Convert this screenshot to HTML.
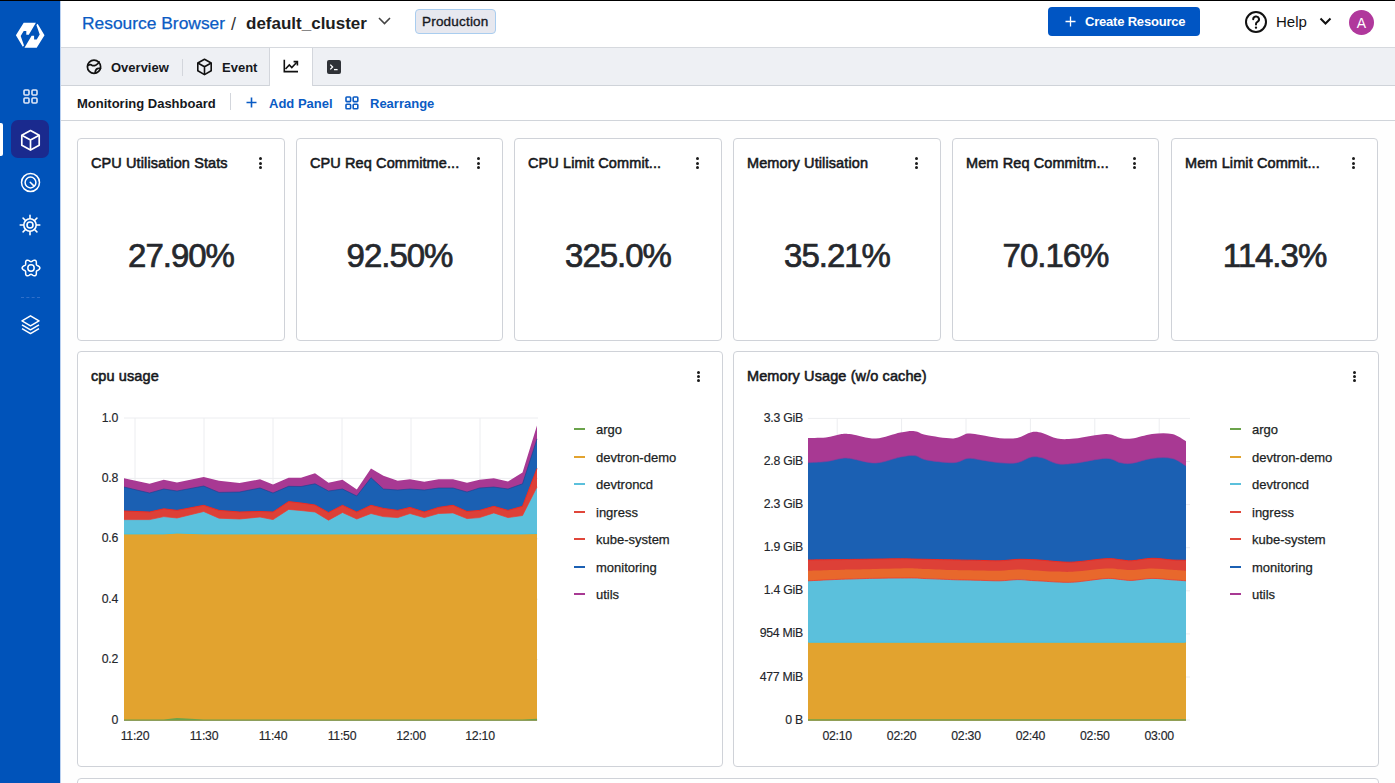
<!DOCTYPE html>
<html><head><meta charset="utf-8">
<style>
*{box-sizing:border-box;margin:0;padding:0}
html,body{width:1395px;height:783px;overflow:hidden;background:#fefefe;font-family:"Liberation Sans",sans-serif;color:#000}
.abs{position:absolute}
#topline{left:0;top:0;width:1395px;height:1px;background:#000}
#side{left:0;top:1px;width:60px;height:782px;background:#0053ba}
#sideb{left:60px;top:1px;width:1px;height:782px;background:#b9d0f0}
#hdr{left:61px;top:1px;width:1334px;height:47px;background:#fff;border-bottom:1px solid #d6d9de}
.t{position:absolute;white-space:nowrap;line-height:1}
#tabs{left:61px;top:48px;width:1334px;height:38px;background:#eef0f4;border-bottom:1px solid #cfd3d9}
#bar2{left:61px;top:86px;width:1334px;height:35px;background:#fff;border-bottom:1px solid #d0d4da}
.card{position:absolute;background:#fff;border:1px solid #cfd2d8;border-radius:4px}
.ct{position:absolute;left:13px;top:17px;font-size:14.5px;color:#16181c;white-space:nowrap;line-height:1;letter-spacing:0.1px;-webkit-text-stroke:0.55px #16181c}
.kb{position:absolute;width:3px;height:3px;border-radius:50%;background:#1b1b1b}
.big{position:absolute;left:0;width:100%;text-align:center;font-size:33px;color:#25282d;line-height:1;letter-spacing:-1px;-webkit-text-stroke:0.7px #25282d}
.lg{position:absolute;font-size:13px;color:#1c1f24;-webkit-text-stroke:0.25px #1c1f24;white-space:nowrap;line-height:1}
.lgl{position:absolute;width:11px;height:2px}
.ax{position:absolute;font-size:12.3px;letter-spacing:-0.25px;color:#23262b;-webkit-text-stroke:0.15px #23262b;white-space:nowrap;line-height:1}
</style></head><body>
<div id="topline" class="abs"></div>
<div id="side" class="abs"></div>
<div id="sideb" class="abs"></div>

<!-- logo -->
<svg class="abs" style="left:0;top:0" width="60" height="60" viewBox="0 0 60 60">
 <path d="M23.7 22.8 L35.9 22.8 L28.8 34.8 L26.3 34.8 L26.3 31 L23.7 31 L20.7 36 L24 45.5 L22.8 46.8 L15.9 35.3 Z" fill="#fff"/>
 <path d="M36.7 47.8 L24.5 47.8 L31.6 35.8 L34.1 35.8 L34.1 39.6 L36.7 39.6 L39.7 34.6 L36.4 25.1 L37.6 23.8 L44.5 35.3 Z" fill="#fff"/>
</svg>
<!-- grid icon -->
<svg class="abs" style="left:23px;top:89px" width="15" height="15" viewBox="0 0 15 15" fill="none" stroke="#dfe8f7" stroke-width="1.6">
 <rect x="1" y="1" width="5" height="5" rx="1"/><rect x="9" y="1" width="5" height="5" rx="1"/>
 <rect x="1" y="9" width="5" height="5" rx="1"/><rect x="9" y="9" width="5" height="5" rx="1"/>
</svg>
<div class="abs" style="left:0;top:123px;width:3px;height:33px;background:#fff;border-radius:0 2px 2px 0"></div>
<div class="abs" style="left:11px;top:120px;width:38px;height:38px;background:#1a2a8e;border-radius:7px"></div>
<svg class="abs" style="left:20px;top:129px" width="21" height="23" viewBox="0 0 21 23" fill="none" stroke="#fff" stroke-width="1.7" stroke-linejoin="round">
 <path d="M10.5 1.5 L19.2 6.3 L19.2 16.3 L10.5 21.1 L1.8 16.3 L1.8 6.3 Z"/><path d="M1.8 6.3 L10.5 11.1 L19.2 6.3 M10.5 11.1 L10.5 21.1"/>
</svg>
<!-- target icon -->
<svg class="abs" style="left:20px;top:172px" width="21" height="21" viewBox="0 0 21 21" fill="none" stroke="#fff" stroke-width="1.5">
 <circle cx="10.5" cy="10.5" r="9"/><circle cx="10.5" cy="10.5" r="5.4"/><path d="M10.2 10.2 L13.6 13.6" stroke-linecap="round"/>
</svg>
<!-- sun gear -->
<svg class="abs" style="left:19px;top:214px" width="22" height="22" viewBox="0 0 22 22" fill="none" stroke="#fff" stroke-width="1.6" stroke-linecap="round">
 <circle cx="11" cy="11" r="6.2"/><circle cx="11" cy="11" r="3"/>
 <path d="M11 1.2v3M11 17.8v3M1.2 11h3M17.8 11h3M4.1 4.1l2.1 2.1M15.8 15.8l2.1 2.1M4.1 17.9l2.1-2.1M15.8 6.2l2.1-2.1"/>
</svg>
<!-- gear -->
<svg class="abs" style="left:20.5px;top:257.8px" width="20" height="20" viewBox="0 0 20 20" fill="none" stroke="#fff" stroke-width="1.5" stroke-linejoin="round">
 <path d="M18.85 10.00 L18.74 10.57 L18.41 11.11 L17.92 11.58 L17.34 11.97 L16.74 12.29 L16.20 12.57 L15.78 12.85 L15.50 13.17 L15.36 13.58 L15.33 14.09 L15.35 14.70 L15.37 15.37 L15.33 16.07 L15.16 16.73 L14.86 17.28 L14.43 17.66 L13.87 17.85 L13.25 17.84 L12.60 17.65 L11.97 17.34 L11.39 16.98 L10.88 16.66 L10.42 16.43 L10.00 16.35 L9.58 16.43 L9.12 16.66 L8.61 16.98 L8.03 17.34 L7.40 17.65 L6.75 17.84 L6.13 17.85 L5.58 17.66 L5.14 17.28 L4.84 16.73 L4.67 16.07 L4.63 15.37 L4.65 14.70 L4.67 14.09 L4.64 13.58 L4.50 13.17 L4.22 12.85 L3.80 12.57 L3.26 12.29 L2.66 11.97 L2.08 11.58 L1.59 11.11 L1.26 10.57 L1.15 10.00 L1.26 9.43 L1.59 8.89 L2.08 8.42 L2.66 8.03 L3.26 7.71 L3.80 7.43 L4.22 7.15 L4.50 6.83 L4.64 6.42 L4.67 5.91 L4.65 5.30 L4.63 4.63 L4.67 3.93 L4.84 3.27 L5.14 2.72 L5.57 2.34 L6.13 2.15 L6.75 2.16 L7.40 2.35 L8.03 2.66 L8.61 3.02 L9.12 3.34 L9.58 3.57 L10.00 3.65 L10.42 3.57 L10.88 3.34 L11.39 3.02 L11.97 2.66 L12.60 2.35 L13.25 2.16 L13.87 2.15 L14.43 2.34 L14.86 2.72 L15.16 3.27 L15.33 3.93 L15.37 4.63 L15.35 5.30 L15.33 5.91 L15.36 6.42 L15.50 6.82 L15.78 7.15 L16.20 7.43 L16.74 7.71 L17.34 8.03 L17.92 8.42 L18.41 8.89 L18.74 9.43Z"/>
 <circle cx="10" cy="10" r="3.2"/>
</svg>
<div class="abs" style="left:21px;top:297px;width:19px;height:0;border-top:1px dashed #2f6fc9"></div>
<!-- layers -->
<svg class="abs" style="left:20px;top:314px" width="21" height="21" viewBox="0 0 21 21" fill="none" stroke="#fff" stroke-width="1.5" stroke-linejoin="round">
 <path d="M10.5 1.8 L19 6.8 L10.5 11.8 L2 6.8 Z"/><path d="M2 10.8 L10.5 15.8 L19 10.8"/><path d="M2 14.6 L10.5 19.6 L19 14.6"/>
</svg>
<div id="hdr" class="abs"></div>

<div class="t" style="left:82px;top:14.7px;font-size:17.4px;color:#0a5bc4;-webkit-text-stroke:0.25px #0a5bc4">Resource Browser</div>
<div class="t" style="left:231px;top:14.7px;font-size:18px;color:#333">/</div>
<div class="t" style="left:246px;top:14.7px;font-size:17px;font-weight:bold;color:#1e1e1e">default_cluster</div>
<svg class="abs" style="left:377px;top:16px" width="15" height="10" viewBox="0 0 15 10" fill="none" stroke="#444" stroke-width="1.6"><path d="M2 2 L7.5 7.5 L13 2"/></svg>
<div class="abs" style="left:415px;top:9px;width:81px;height:25px;background:#e7e8ef;border:1px solid #a9cdef;border-radius:4px"></div>
<div class="t" style="left:422px;top:15px;font-size:13.5px;letter-spacing:0.2px;color:#16181f;-webkit-text-stroke:0.35px #16181f">Production</div>
<div class="abs" style="left:1048px;top:7px;width:152px;height:29px;background:#0055c3;border-radius:4px"></div>
<svg class="abs" style="left:1065px;top:16px" width="11" height="11" viewBox="0 0 11 11" stroke="#fff" stroke-width="1.3"><path d="M5.5 0.5v10M0.5 5.5h10"/></svg>
<div class="t" style="left:1085px;top:15px;font-size:13px;font-weight:bold;color:#fff;letter-spacing:-0.2px">Create Resource</div>
<svg class="abs" style="left:1244px;top:10px" width="24" height="24" viewBox="0 0 24 24" fill="none" stroke="#111" stroke-width="2"><circle cx="12" cy="12" r="10"/><path d="M9.2 9.3a2.9 2.9 0 1 1 4.2 2.6c-.9.5-1.4 1.1-1.4 2.1v.5" stroke-linecap="round"/><circle cx="12" cy="17.6" r="0.6" fill="#111" stroke-width="1.2"/></svg>
<div class="t" style="left:1276px;top:14px;font-size:15px;color:#111">Help</div>
<svg class="abs" style="left:1319px;top:17px" width="13" height="9" viewBox="0 0 13 9" fill="none" stroke="#111" stroke-width="2"><path d="M1.5 1.5 L6.5 6.5 L11.5 1.5"/></svg>
<div class="abs" style="left:1349px;top:10px;width:25px;height:25px;border-radius:50%;background:#b0389c"></div>
<div class="t" style="left:1349px;top:16px;width:25px;text-align:center;font-size:14px;color:#fff">A</div>
<div id="tabs" class="abs"></div>
<div id="bar2" class="abs"></div>

<!-- tabs -->
<svg class="abs" style="left:86px;top:59px" width="16" height="16" viewBox="0 0 16 16" fill="none" stroke="#111" stroke-width="1.7" stroke-linejoin="round" stroke-linecap="round">
 <circle cx="8" cy="7.8" r="6.6"/><path d="M1.8 6.6 C3.5 5.4 4.8 5.2 6 6.3 C7.2 7.3 8.6 6.6 10.4 5.8 C11.8 5.1 12.6 4.2 13 2.8"/><path d="M9.2 14 C9.2 11.6 9.6 10.4 11.4 9.6 C12.6 9.1 13.8 9.2 14.6 9.4"/>
</svg>
<div class="t" style="left:111px;top:61px;font-size:13px;font-weight:bold;color:#16181c">Overview</div>
<div class="abs" style="left:182px;top:59px;width:1px;height:17px;background:#d3d6dc"></div>
<svg class="abs" style="left:196px;top:58px" width="17" height="18" viewBox="0 0 17 18" fill="none" stroke="#111" stroke-width="1.6" stroke-linejoin="round">
 <path d="M8.5 1.3 L15.2 5 L15.2 12.8 L8.5 16.6 L1.8 12.8 L1.8 5 Z"/><path d="M1.8 5 L8.5 8.8 L15.2 5 M8.5 8.8 L8.5 16.6"/>
</svg>
<div class="t" style="left:222px;top:61px;font-size:13px;font-weight:bold;color:#16181c">Event</div>
<div class="abs" style="left:269px;top:48px;width:44px;height:38px;background:#fff;border-left:1px solid #d3d6dc;border-right:1px solid #d3d6dc"></div>
<svg class="abs" style="left:283px;top:59px" width="16" height="14" viewBox="0 0 16 14" fill="none" stroke="#111" stroke-width="1.6" stroke-linejoin="miter">
 <path d="M1.3 0.8 L1.3 12.6 L15 12.6"/><path d="M2.5 10 L6.3 6 L8.8 8.6 L13.8 3.2"/><path d="M10.6 2.6 L14.4 2.6 L14.4 6.4"/>
</svg>
<div class="abs" style="left:327px;top:60px;width:14px;height:14px;background:#2f3237;border-radius:2px"></div>
<svg class="abs" style="left:327px;top:60px" width="14" height="14" viewBox="0 0 14 14" fill="none" stroke="#fff" stroke-width="1.3"><path d="M3.3 4.6 L5.6 7 L3.3 9.4"/><path d="M7 9.6 L10.6 9.6"/></svg>
<!-- bar2 -->
<div class="t" style="left:77px;top:97px;font-size:13px;color:#16181c;font-weight:bold">Monitoring Dashboard</div>
<div class="abs" style="left:230px;top:93px;width:1px;height:17px;background:#d3d6dc"></div>
<svg class="abs" style="left:246px;top:97px" width="11" height="11" viewBox="0 0 11 11" stroke="#0a5bc4" stroke-width="1.6"><path d="M5.5 0.5v10M0.5 5.5h10"/></svg>
<div class="t" style="left:269px;top:97px;font-size:13px;font-weight:bold;color:#0a5bc4">Add Panel</div>
<svg class="abs" style="left:345px;top:96px" width="14" height="14" viewBox="0 0 14 14" fill="none" stroke="#0a5bc4" stroke-width="1.6">
 <rect x="1" y="1" width="4.6" height="4.6" rx="0.8"/><rect x="8.2" y="1" width="4.6" height="4.6" rx="0.8"/><rect x="1" y="8.2" width="4.6" height="4.6" rx="0.8"/><rect x="8.2" y="8.2" width="4.6" height="4.6" rx="0.8"/>
</svg>
<div class="t" style="left:370px;top:97px;font-size:13px;font-weight:bold;color:#0a5bc4">Rearrange</div>

<!-- stat cards -->
<div class="card" style="left:77px;top:138px;width:208px;height:203px"><div class="ct">CPU Utilisation Stats</div><div class="kb" style="left:181px;top:18px"></div><div class="kb" style="left:181px;top:22.5px"></div><div class="kb" style="left:181px;top:27px"></div><div class="big" style="top:100px">27.90%</div></div>
<div class="card" style="left:296px;top:138px;width:207px;height:203px"><div class="ct">CPU Req Commitme...</div><div class="kb" style="left:180px;top:18px"></div><div class="kb" style="left:180px;top:22.5px"></div><div class="kb" style="left:180px;top:27px"></div><div class="big" style="top:100px">92.50%</div></div>
<div class="card" style="left:514px;top:138px;width:208px;height:203px"><div class="ct">CPU Limit Commit...</div><div class="kb" style="left:181px;top:18px"></div><div class="kb" style="left:181px;top:22.5px"></div><div class="kb" style="left:181px;top:27px"></div><div class="big" style="top:100px">325.0%</div></div>
<div class="card" style="left:733px;top:138px;width:208px;height:203px"><div class="ct">Memory Utilisation</div><div class="kb" style="left:181px;top:18px"></div><div class="kb" style="left:181px;top:22.5px"></div><div class="kb" style="left:181px;top:27px"></div><div class="big" style="top:100px">35.21%</div></div>
<div class="card" style="left:952px;top:138px;width:207px;height:203px"><div class="ct">Mem Req Commitm...</div><div class="kb" style="left:180px;top:18px"></div><div class="kb" style="left:180px;top:22.5px"></div><div class="kb" style="left:180px;top:27px"></div><div class="big" style="top:100px">70.16%</div></div>
<div class="card" style="left:1171px;top:138px;width:207px;height:203px"><div class="ct">Mem Limit Commit...</div><div class="kb" style="left:180px;top:18px"></div><div class="kb" style="left:180px;top:22.5px"></div><div class="kb" style="left:180px;top:27px"></div><div class="big" style="top:100px">114.3%</div></div>

<!-- chart cards -->
<div class="card" style="left:77px;top:351px;width:646px;height:416px"><div class="ct" style="top:17px">cpu usage</div>
<div class="kb" style="left:619px;top:18.5px"></div><div class="kb" style="left:619px;top:23px"></div><div class="kb" style="left:619px;top:27.3px"></div></div>
<div class="card" style="left:733px;top:351px;width:646px;height:416px"><div class="ct" style="top:17px">Memory Usage (w/o cache)</div>
<div class="kb" style="left:619px;top:18.5px"></div><div class="kb" style="left:619px;top:23px"></div><div class="kb" style="left:619px;top:27.3px"></div></div>
<div class="card" style="left:77px;top:778px;width:1302px;height:100px"></div>
<!--CHARTS--><svg class="abs" style="left:0;top:0" width="1395" height="783" viewBox="0 0 1395 783"><path d="M124 418 H538" stroke="#ecedf0" stroke-width="1"/><path d="M124 478.4 H538" stroke="#ecedf0" stroke-width="1"/><path d="M124 538.8 H538" stroke="#ecedf0" stroke-width="1"/><path d="M124 599.2 H538" stroke="#ecedf0" stroke-width="1"/><path d="M124 659.6 H538" stroke="#ecedf0" stroke-width="1"/><path d="M124 720 H538" stroke="#ecedf0" stroke-width="1"/><path d="M135 418 V720" stroke="#ecedf0" stroke-width="1"/><path d="M204 418 V720" stroke="#ecedf0" stroke-width="1"/><path d="M273 418 V720" stroke="#ecedf0" stroke-width="1"/><path d="M342 418 V720" stroke="#ecedf0" stroke-width="1"/><path d="M411 418 V720" stroke="#ecedf0" stroke-width="1"/><path d="M480 418 V720" stroke="#ecedf0" stroke-width="1"/><path d="M124.0 478.3 L149.5 483.8 L163.8 479.8 L177.0 482.4 L203.7 477.0 L219.0 480.8 L239.5 483.0 L260.0 479.3 L273.0 484.5 L288.6 477.7 L301.0 477.7 L315.0 473.2 L328.5 482.8 L342.5 479.8 L356.8 489.6 L371.0 468.5 L383.4 475.7 L397.7 480.8 L410.0 479.3 L424.3 481.8 L438.6 479.3 L453.0 479.3 L467.0 482.8 L479.5 479.8 L493.8 478.3 L508.0 481.4 L522.5 472.6 L537.0 425.6 L537.0 720.5 L522.5 720.5 L508.0 720.5 L493.8 720.5 L479.5 720.5 L467.0 720.5 L453.0 720.5 L438.6 720.5 L424.3 720.5 L410.0 720.5 L397.7 720.5 L383.4 720.5 L371.0 720.5 L356.8 720.5 L342.5 720.5 L328.5 720.5 L315.0 720.5 L301.0 720.5 L288.6 720.5 L273.0 720.5 L260.0 720.5 L239.5 720.5 L219.0 720.5 L203.7 720.5 L177.0 720.5 L163.8 720.5 L149.5 720.5 L124.0 720.5 Z" fill="#a83993"/><path d="M124.0 487.0 L149.5 493.0 L163.8 489.0 L177.0 491.0 L203.7 486.0 L219.0 492.4 L239.5 492.0 L260.0 488.0 L273.0 493.0 L288.6 486.3 L301.0 486.5 L315.0 483.8 L328.5 491.0 L342.5 489.0 L356.8 496.0 L371.0 477.7 L383.4 489.0 L397.7 490.0 L410.0 489.0 L424.3 490.0 L438.6 488.0 L453.0 488.0 L467.0 492.0 L479.5 488.0 L493.8 487.0 L508.0 489.0 L522.5 483.8 L537.0 438.9 L537.0 720.5 L522.5 720.5 L508.0 720.5 L493.8 720.5 L479.5 720.5 L467.0 720.5 L453.0 720.5 L438.6 720.5 L424.3 720.5 L410.0 720.5 L397.7 720.5 L383.4 720.5 L371.0 720.5 L356.8 720.5 L342.5 720.5 L328.5 720.5 L315.0 720.5 L301.0 720.5 L288.6 720.5 L273.0 720.5 L260.0 720.5 L239.5 720.5 L219.0 720.5 L203.7 720.5 L177.0 720.5 L163.8 720.5 L149.5 720.5 L124.0 720.5 Z" fill="#1b60b3"/><path d="M124.0 487.0 L149.5 493.0 L163.8 489.0 L177.0 491.0 L203.7 486.0 L219.0 492.4 L239.5 492.0 L260.0 488.0 L273.0 493.0 L288.6 486.3 L301.0 486.5 L315.0 483.8 L328.5 491.0 L342.5 489.0 L356.8 496.0 L371.0 477.7 L383.4 489.0 L397.7 490.0 L410.0 489.0 L424.3 490.0 L438.6 488.0 L453.0 488.0 L467.0 492.0 L479.5 488.0 L493.8 487.0 L508.0 489.0 L522.5 483.8 L537.0 438.9" stroke="#1a3f8f" stroke-width="0.6" fill="none"/><path d="M124.0 511.0 L149.5 512.0 L163.8 508.8 L177.0 510.4 L203.7 505.3 L219.0 510.4 L239.5 512.0 L260.0 511.5 L273.0 512.0 L288.6 501.6 L301.0 503.0 L315.0 505.0 L328.5 512.5 L342.5 505.3 L356.8 512.0 L371.0 505.3 L383.4 508.4 L397.7 510.4 L410.0 507.4 L424.3 512.0 L438.6 507.4 L453.0 505.3 L467.0 511.5 L479.5 510.4 L493.8 506.3 L508.0 510.4 L522.5 506.3 L537.0 468.5 L537.0 720.5 L522.5 720.5 L508.0 720.5 L493.8 720.5 L479.5 720.5 L467.0 720.5 L453.0 720.5 L438.6 720.5 L424.3 720.5 L410.0 720.5 L397.7 720.5 L383.4 720.5 L371.0 720.5 L356.8 720.5 L342.5 720.5 L328.5 720.5 L315.0 720.5 L301.0 720.5 L288.6 720.5 L273.0 720.5 L260.0 720.5 L239.5 720.5 L219.0 720.5 L203.7 720.5 L177.0 720.5 L163.8 720.5 L149.5 720.5 L124.0 720.5 Z" fill="#dd4037"/><path d="M124.0 511.0 L149.5 512.0 L163.8 508.8 L177.0 510.4 L203.7 505.3 L219.0 510.4 L239.5 512.0 L260.0 511.5 L273.0 512.0 L288.6 501.6 L301.0 503.0 L315.0 505.0 L328.5 512.5 L342.5 505.3 L356.8 512.0 L371.0 505.3 L383.4 508.4 L397.7 510.4 L410.0 507.4 L424.3 512.0 L438.6 507.4 L453.0 505.3 L467.0 511.5 L479.5 510.4 L493.8 506.3 L508.0 510.4 L522.5 506.3 L537.0 468.5" stroke="#ee2a22" stroke-width="1" fill="none"/><path d="M124.0 519.6 L149.5 519.6 L163.8 516.6 L177.0 518.0 L203.7 511.5 L219.0 518.2 L239.5 519.0 L260.0 517.0 L273.0 519.6 L288.6 509.4 L301.0 510.5 L315.0 512.0 L328.5 520.2 L342.5 512.5 L356.8 519.0 L371.0 513.5 L383.4 516.6 L397.7 517.6 L410.0 513.5 L424.3 517.6 L438.6 513.5 L453.0 512.9 L467.0 518.6 L479.5 517.6 L493.8 512.9 L508.0 517.6 L522.5 515.5 L537.0 486.9 L537.0 720.5 L522.5 720.5 L508.0 720.5 L493.8 720.5 L479.5 720.5 L467.0 720.5 L453.0 720.5 L438.6 720.5 L424.3 720.5 L410.0 720.5 L397.7 720.5 L383.4 720.5 L371.0 720.5 L356.8 720.5 L342.5 720.5 L328.5 720.5 L315.0 720.5 L301.0 720.5 L288.6 720.5 L273.0 720.5 L260.0 720.5 L239.5 720.5 L219.0 720.5 L203.7 720.5 L177.0 720.5 L163.8 720.5 L149.5 720.5 L124.0 720.5 Z" fill="#5bc0dc"/><path d="M124.0 519.6 L149.5 519.6 L163.8 516.6 L177.0 518.0 L203.7 511.5 L219.0 518.2 L239.5 519.0 L260.0 517.0 L273.0 519.6 L288.6 509.4 L301.0 510.5 L315.0 512.0 L328.5 520.2 L342.5 512.5 L356.8 519.0 L371.0 513.5 L383.4 516.6 L397.7 517.6 L410.0 513.5 L424.3 517.6 L438.6 513.5 L453.0 512.9 L467.0 518.6 L479.5 517.6 L493.8 512.9 L508.0 517.6 L522.5 515.5 L537.0 486.9" stroke="#f0392c" stroke-width="0.7" fill="none"/><path d="M124.0 533.9 L149.5 533.9 L163.8 533.9 L177.0 533.0 L203.7 533.9 L219.0 533.9 L239.5 533.9 L260.0 533.9 L273.0 533.9 L288.6 533.9 L301.0 533.9 L315.0 533.9 L328.5 533.9 L342.5 533.9 L356.8 533.9 L371.0 533.9 L383.4 533.9 L397.7 533.9 L410.0 533.9 L424.3 533.9 L438.6 533.9 L453.0 533.9 L467.0 533.9 L479.5 533.9 L493.8 533.9 L508.0 533.9 L522.5 533.9 L537.0 533.5 L537.0 720.5 L522.5 720.5 L508.0 720.5 L493.8 720.5 L479.5 720.5 L467.0 720.5 L453.0 720.5 L438.6 720.5 L424.3 720.5 L410.0 720.5 L397.7 720.5 L383.4 720.5 L371.0 720.5 L356.8 720.5 L342.5 720.5 L328.5 720.5 L315.0 720.5 L301.0 720.5 L288.6 720.5 L273.0 720.5 L260.0 720.5 L239.5 720.5 L219.0 720.5 L203.7 720.5 L177.0 720.5 L163.8 720.5 L149.5 720.5 L124.0 720.5 Z" fill="#e2a32f"/><path d="M124.0 533.9 L149.5 533.9 L163.8 533.9 L177.0 533.0 L203.7 533.9 L219.0 533.9 L239.5 533.9 L260.0 533.9 L273.0 533.9 L288.6 533.9 L301.0 533.9 L315.0 533.9 L328.5 533.9 L342.5 533.9 L356.8 533.9 L371.0 533.9 L383.4 533.9 L397.7 533.9 L410.0 533.9 L424.3 533.9 L438.6 533.9 L453.0 533.9 L467.0 533.9 L479.5 533.9 L493.8 533.9 L508.0 533.9 L522.5 533.9 L537.0 533.5" stroke="#3fc6ec" stroke-width="1" fill="none"/><path d="M124.0 719.6 L149.5 719.6 L163.8 719.6 L177.0 718.0 L203.7 719.6 L219.0 719.6 L239.5 719.6 L260.0 719.6 L273.0 719.6 L288.6 719.6 L301.0 719.6 L315.0 719.6 L328.5 719.6 L342.5 719.6 L356.8 719.6 L371.0 719.6 L383.4 719.6 L397.7 719.6 L410.0 719.6 L424.3 719.6 L438.6 719.6 L453.0 719.6 L467.0 719.6 L479.5 719.6 L493.8 719.6 L508.0 719.6 L522.5 719.6 L537.0 718.8 L537.0 720.5 L522.5 720.5 L508.0 720.5 L493.8 720.5 L479.5 720.5 L467.0 720.5 L453.0 720.5 L438.6 720.5 L424.3 720.5 L410.0 720.5 L397.7 720.5 L383.4 720.5 L371.0 720.5 L356.8 720.5 L342.5 720.5 L328.5 720.5 L315.0 720.5 L301.0 720.5 L288.6 720.5 L273.0 720.5 L260.0 720.5 L239.5 720.5 L219.0 720.5 L203.7 720.5 L177.0 720.5 L163.8 720.5 L149.5 720.5 L124.0 720.5 Z" fill="#6ba34b"/></svg>
<svg class="abs" style="left:0;top:0" width="1395" height="783" viewBox="0 0 1395 783"><path d="M808 418.4 H1190" stroke="#ecedf0" stroke-width="1"/><path d="M808 461.5 H1190" stroke="#ecedf0" stroke-width="1"/><path d="M808 504.6 H1190" stroke="#ecedf0" stroke-width="1"/><path d="M808 547.7 H1190" stroke="#ecedf0" stroke-width="1"/><path d="M808 590.8 H1190" stroke="#ecedf0" stroke-width="1"/><path d="M808 633.9 H1190" stroke="#ecedf0" stroke-width="1"/><path d="M808 677.0 H1190" stroke="#ecedf0" stroke-width="1"/><path d="M808 720.0 H1190" stroke="#ecedf0" stroke-width="1"/><path d="M837.2 418 V720" stroke="#ecedf0" stroke-width="1"/><path d="M901.6 418 V720" stroke="#ecedf0" stroke-width="1"/><path d="M966.0 418 V720" stroke="#ecedf0" stroke-width="1"/><path d="M1030.4 418 V720" stroke="#ecedf0" stroke-width="1"/><path d="M1094.8 418 V720" stroke="#ecedf0" stroke-width="1"/><path d="M1159.2 418 V720" stroke="#ecedf0" stroke-width="1"/><path d="M808.0 437.9 C811.0 437.8 820.2 438.1 825.8 437.5 C831.4 436.9 837.3 434.5 841.6 434.0 C845.9 433.5 845.9 433.5 851.6 434.3 C857.3 435.1 867.9 438.9 876.0 438.6 C884.1 438.3 893.9 433.8 900.4 432.6 C906.9 431.4 910.4 430.8 914.7 431.2 C919.0 431.6 919.8 433.8 926.2 435.0 C932.7 436.2 946.5 438.6 953.4 438.4 C960.3 438.2 963.2 434.2 967.7 433.6 C972.2 433.0 975.2 434.2 980.6 435.0 C986.0 435.8 993.9 437.7 1000.0 438.2 C1006.1 438.7 1012.0 438.9 1017.2 437.9 C1022.5 436.9 1027.2 433.0 1031.5 432.2 C1035.8 431.4 1038.7 432.1 1043.0 433.2 C1047.3 434.3 1052.0 437.7 1057.3 438.6 C1062.6 439.5 1066.5 439.4 1074.6 438.6 C1082.7 437.8 1098.4 434.1 1106.0 434.0 C1113.6 433.9 1116.1 437.1 1120.4 437.9 C1124.7 438.7 1126.6 439.2 1131.9 438.6 C1137.2 438.0 1145.3 434.8 1152.0 434.0 C1158.7 433.2 1166.3 432.8 1172.0 434.0 C1177.7 435.2 1183.7 440.0 1186.0 441.2 L1186.0 720.5 C1183.7 720.5 1177.7 720.5 1172.0 720.5 C1166.3 720.5 1158.7 720.5 1152.0 720.5 C1145.3 720.5 1137.2 720.5 1131.9 720.5 C1126.6 720.5 1124.7 720.5 1120.4 720.5 C1116.1 720.5 1113.6 720.5 1106.0 720.5 C1098.4 720.5 1082.7 720.5 1074.6 720.5 C1066.5 720.5 1062.6 720.5 1057.3 720.5 C1052.0 720.5 1047.3 720.5 1043.0 720.5 C1038.7 720.5 1035.8 720.5 1031.5 720.5 C1027.2 720.5 1022.5 720.5 1017.2 720.5 C1012.0 720.5 1006.1 720.5 1000.0 720.5 C993.9 720.5 986.0 720.5 980.6 720.5 C975.2 720.5 972.2 720.5 967.7 720.5 C963.2 720.5 960.3 720.5 953.4 720.5 C946.5 720.5 932.7 720.5 926.2 720.5 C919.8 720.5 919.0 720.5 914.7 720.5 C910.4 720.5 906.9 720.5 900.4 720.5 C893.9 720.5 884.1 720.5 876.0 720.5 C867.9 720.5 857.3 720.5 851.6 720.5 C845.9 720.5 845.9 720.5 841.6 720.5 C837.3 720.5 831.4 720.5 825.8 720.5 C820.2 720.5 811.0 720.5 808.0 720.5 Z" fill="#a83993"/><path d="M808.0 462.7 C811.0 462.5 820.2 462.3 825.8 461.6 C831.4 460.9 837.3 458.9 841.6 458.4 C845.9 457.9 845.9 457.9 851.6 458.7 C857.3 459.5 867.9 463.3 876.0 463.0 C884.1 462.7 893.9 458.2 900.4 457.0 C906.9 455.8 910.4 455.1 914.7 455.6 C919.0 456.1 919.8 458.7 926.2 459.9 C932.7 461.1 946.5 462.9 953.4 462.7 C960.3 462.4 963.2 458.9 967.7 458.4 C972.2 457.9 975.2 459.2 980.6 459.9 C986.0 460.6 993.9 462.3 1000.0 462.8 C1006.1 463.3 1012.0 463.7 1017.2 462.7 C1022.5 461.7 1027.2 457.8 1031.5 457.0 C1035.8 456.2 1038.7 456.9 1043.0 458.0 C1047.3 459.1 1052.0 462.8 1057.3 463.7 C1062.6 464.6 1066.5 464.2 1074.6 463.3 C1082.7 462.4 1098.4 458.5 1106.0 458.4 C1113.6 458.3 1116.1 461.9 1120.4 462.7 C1124.7 463.5 1126.6 464.0 1131.9 463.3 C1137.2 462.6 1145.3 459.2 1152.0 458.4 C1158.7 457.6 1166.3 457.1 1172.0 458.4 C1177.7 459.6 1183.7 464.6 1186.0 465.9 L1186.0 720.5 C1183.7 720.5 1177.7 720.5 1172.0 720.5 C1166.3 720.5 1158.7 720.5 1152.0 720.5 C1145.3 720.5 1137.2 720.5 1131.9 720.5 C1126.6 720.5 1124.7 720.5 1120.4 720.5 C1116.1 720.5 1113.6 720.5 1106.0 720.5 C1098.4 720.5 1082.7 720.5 1074.6 720.5 C1066.5 720.5 1062.6 720.5 1057.3 720.5 C1052.0 720.5 1047.3 720.5 1043.0 720.5 C1038.7 720.5 1035.8 720.5 1031.5 720.5 C1027.2 720.5 1022.5 720.5 1017.2 720.5 C1012.0 720.5 1006.1 720.5 1000.0 720.5 C993.9 720.5 986.0 720.5 980.6 720.5 C975.2 720.5 972.2 720.5 967.7 720.5 C963.2 720.5 960.3 720.5 953.4 720.5 C946.5 720.5 932.7 720.5 926.2 720.5 C919.8 720.5 919.0 720.5 914.7 720.5 C910.4 720.5 906.9 720.5 900.4 720.5 C893.9 720.5 884.1 720.5 876.0 720.5 C867.9 720.5 857.3 720.5 851.6 720.5 C845.9 720.5 845.9 720.5 841.6 720.5 C837.3 720.5 831.4 720.5 825.8 720.5 C820.2 720.5 811.0 720.5 808.0 720.5 Z" fill="#1b60b3"/><path d="M808.0 462.7 C811.0 462.5 820.2 462.3 825.8 461.6 C831.4 460.9 837.3 458.9 841.6 458.4 C845.9 457.9 845.9 457.9 851.6 458.7 C857.3 459.5 867.9 463.3 876.0 463.0 C884.1 462.7 893.9 458.2 900.4 457.0 C906.9 455.8 910.4 455.1 914.7 455.6 C919.0 456.1 919.8 458.7 926.2 459.9 C932.7 461.1 946.5 462.9 953.4 462.7 C960.3 462.4 963.2 458.9 967.7 458.4 C972.2 457.9 975.2 459.2 980.6 459.9 C986.0 460.6 993.9 462.3 1000.0 462.8 C1006.1 463.3 1012.0 463.7 1017.2 462.7 C1022.5 461.7 1027.2 457.8 1031.5 457.0 C1035.8 456.2 1038.7 456.9 1043.0 458.0 C1047.3 459.1 1052.0 462.8 1057.3 463.7 C1062.6 464.6 1066.5 464.2 1074.6 463.3 C1082.7 462.4 1098.4 458.5 1106.0 458.4 C1113.6 458.3 1116.1 461.9 1120.4 462.7 C1124.7 463.5 1126.6 464.0 1131.9 463.3 C1137.2 462.6 1145.3 459.2 1152.0 458.4 C1158.7 457.6 1166.3 457.1 1172.0 458.4 C1177.7 459.6 1183.7 464.6 1186.0 465.9" stroke="#8a3c9a" stroke-width="0.6" fill="none"/><path d="M808.0 560.0 C811.0 560.0 820.2 559.8 825.8 559.8 C831.4 559.7 837.3 559.6 841.6 559.6 C845.9 559.5 845.9 559.5 851.6 559.4 C857.3 559.4 867.9 559.2 876.0 559.1 C884.1 559.0 893.9 558.8 900.4 558.8 C906.9 558.8 910.4 559.0 914.7 559.1 C919.0 559.2 919.8 559.2 926.2 559.3 C932.7 559.5 946.5 559.7 953.4 559.9 C960.3 560.0 963.2 560.1 967.7 560.2 C972.2 560.2 975.2 560.3 980.6 560.4 C986.0 560.5 993.9 561.0 1000.0 560.8 C1006.1 560.6 1012.0 559.6 1017.2 559.4 C1022.5 559.2 1027.2 559.5 1031.5 559.6 C1035.8 559.8 1038.7 560.0 1043.0 560.3 C1047.3 560.6 1052.0 561.3 1057.3 561.6 C1062.6 561.9 1066.5 562.5 1074.6 562.0 C1082.7 561.5 1098.4 559.1 1106.0 558.7 C1113.6 558.3 1116.1 559.4 1120.4 559.8 C1124.7 560.1 1126.6 561.0 1131.9 560.8 C1137.2 560.5 1145.3 558.4 1152.0 558.3 C1158.7 558.1 1166.3 559.6 1172.0 560.0 C1177.7 560.3 1183.7 560.2 1186.0 560.3 L1186.0 720.5 C1183.7 720.5 1177.7 720.5 1172.0 720.5 C1166.3 720.5 1158.7 720.5 1152.0 720.5 C1145.3 720.5 1137.2 720.5 1131.9 720.5 C1126.6 720.5 1124.7 720.5 1120.4 720.5 C1116.1 720.5 1113.6 720.5 1106.0 720.5 C1098.4 720.5 1082.7 720.5 1074.6 720.5 C1066.5 720.5 1062.6 720.5 1057.3 720.5 C1052.0 720.5 1047.3 720.5 1043.0 720.5 C1038.7 720.5 1035.8 720.5 1031.5 720.5 C1027.2 720.5 1022.5 720.5 1017.2 720.5 C1012.0 720.5 1006.1 720.5 1000.0 720.5 C993.9 720.5 986.0 720.5 980.6 720.5 C975.2 720.5 972.2 720.5 967.7 720.5 C963.2 720.5 960.3 720.5 953.4 720.5 C946.5 720.5 932.7 720.5 926.2 720.5 C919.8 720.5 919.0 720.5 914.7 720.5 C910.4 720.5 906.9 720.5 900.4 720.5 C893.9 720.5 884.1 720.5 876.0 720.5 C867.9 720.5 857.3 720.5 851.6 720.5 C845.9 720.5 845.9 720.5 841.6 720.5 C837.3 720.5 831.4 720.5 825.8 720.5 C820.2 720.5 811.0 720.5 808.0 720.5 Z" fill="#dd4037"/><path d="M808.0 560.0 C811.0 560.0 820.2 559.8 825.8 559.8 C831.4 559.7 837.3 559.6 841.6 559.6 C845.9 559.5 845.9 559.5 851.6 559.4 C857.3 559.4 867.9 559.2 876.0 559.1 C884.1 559.0 893.9 558.8 900.4 558.8 C906.9 558.8 910.4 559.0 914.7 559.1 C919.0 559.2 919.8 559.2 926.2 559.3 C932.7 559.5 946.5 559.7 953.4 559.9 C960.3 560.0 963.2 560.1 967.7 560.2 C972.2 560.2 975.2 560.3 980.6 560.4 C986.0 560.5 993.9 561.0 1000.0 560.8 C1006.1 560.6 1012.0 559.6 1017.2 559.4 C1022.5 559.2 1027.2 559.5 1031.5 559.6 C1035.8 559.8 1038.7 560.0 1043.0 560.3 C1047.3 560.6 1052.0 561.3 1057.3 561.6 C1062.6 561.9 1066.5 562.5 1074.6 562.0 C1082.7 561.5 1098.4 559.1 1106.0 558.7 C1113.6 558.3 1116.1 559.4 1120.4 559.8 C1124.7 560.1 1126.6 561.0 1131.9 560.8 C1137.2 560.5 1145.3 558.4 1152.0 558.3 C1158.7 558.1 1166.3 559.6 1172.0 560.0 C1177.7 560.3 1183.7 560.2 1186.0 560.3" stroke="#ee2a22" stroke-width="1" fill="none"/><path d="M808.0 570.8 C811.0 570.7 820.2 570.5 825.8 570.3 C831.4 570.1 837.3 570.0 841.6 569.8 C845.9 569.7 845.9 569.7 851.6 569.6 C857.3 569.4 867.9 569.1 876.0 568.9 C884.1 568.7 893.9 568.6 900.4 568.5 C906.9 568.4 910.4 568.3 914.7 568.4 C919.0 568.5 919.8 568.7 926.2 569.0 C932.7 569.3 946.5 569.9 953.4 570.1 C960.3 570.4 963.2 570.3 967.7 570.3 C972.2 570.4 975.2 570.5 980.6 570.5 C986.0 570.6 993.9 571.0 1000.0 570.8 C1006.1 570.6 1012.0 569.6 1017.2 569.6 C1022.5 569.5 1027.2 570.1 1031.5 570.3 C1035.8 570.5 1038.7 570.7 1043.0 570.9 C1047.3 571.1 1052.0 571.5 1057.3 571.6 C1062.6 571.7 1066.5 572.2 1074.6 571.6 C1082.7 571.1 1098.4 568.9 1106.0 568.5 C1113.6 568.1 1116.1 569.0 1120.4 569.3 C1124.7 569.5 1126.6 570.1 1131.9 570.0 C1137.2 569.9 1145.3 568.5 1152.0 568.4 C1158.7 568.4 1166.3 569.5 1172.0 569.8 C1177.7 570.2 1183.7 570.6 1186.0 570.8 L1186.0 720.5 C1183.7 720.5 1177.7 720.5 1172.0 720.5 C1166.3 720.5 1158.7 720.5 1152.0 720.5 C1145.3 720.5 1137.2 720.5 1131.9 720.5 C1126.6 720.5 1124.7 720.5 1120.4 720.5 C1116.1 720.5 1113.6 720.5 1106.0 720.5 C1098.4 720.5 1082.7 720.5 1074.6 720.5 C1066.5 720.5 1062.6 720.5 1057.3 720.5 C1052.0 720.5 1047.3 720.5 1043.0 720.5 C1038.7 720.5 1035.8 720.5 1031.5 720.5 C1027.2 720.5 1022.5 720.5 1017.2 720.5 C1012.0 720.5 1006.1 720.5 1000.0 720.5 C993.9 720.5 986.0 720.5 980.6 720.5 C975.2 720.5 972.2 720.5 967.7 720.5 C963.2 720.5 960.3 720.5 953.4 720.5 C946.5 720.5 932.7 720.5 926.2 720.5 C919.8 720.5 919.0 720.5 914.7 720.5 C910.4 720.5 906.9 720.5 900.4 720.5 C893.9 720.5 884.1 720.5 876.0 720.5 C867.9 720.5 857.3 720.5 851.6 720.5 C845.9 720.5 845.9 720.5 841.6 720.5 C837.3 720.5 831.4 720.5 825.8 720.5 C820.2 720.5 811.0 720.5 808.0 720.5 Z" fill="#e8682c"/><path d="M808.0 580.8 C811.0 580.7 820.2 580.2 825.8 579.9 C831.4 579.7 837.3 579.4 841.6 579.2 C845.9 579.1 845.9 579.1 851.6 579.0 C857.3 578.8 867.9 578.4 876.0 578.3 C884.1 578.1 893.9 578.0 900.4 578.0 C906.9 578.0 910.4 577.9 914.7 578.0 C919.0 578.1 919.8 578.3 926.2 578.6 C932.7 578.8 946.5 579.4 953.4 579.7 C960.3 579.9 963.2 579.9 967.7 580.0 C972.2 580.1 975.2 580.2 980.6 580.3 C986.0 580.5 993.9 580.9 1000.0 580.8 C1006.1 580.7 1012.0 579.7 1017.2 579.6 C1022.5 579.5 1027.2 580.2 1031.5 580.5 C1035.8 580.7 1038.7 580.9 1043.0 581.1 C1047.3 581.4 1052.0 581.8 1057.3 582.0 C1062.6 582.2 1066.5 582.6 1074.6 582.1 C1082.7 581.5 1098.4 578.9 1106.0 578.5 C1113.6 578.1 1116.1 579.2 1120.4 579.5 C1124.7 579.8 1126.6 580.6 1131.9 580.4 C1137.2 580.2 1145.3 578.5 1152.0 578.4 C1158.7 578.3 1166.3 579.5 1172.0 579.8 C1177.7 580.2 1183.7 580.6 1186.0 580.8 L1186.0 720.5 C1183.7 720.5 1177.7 720.5 1172.0 720.5 C1166.3 720.5 1158.7 720.5 1152.0 720.5 C1145.3 720.5 1137.2 720.5 1131.9 720.5 C1126.6 720.5 1124.7 720.5 1120.4 720.5 C1116.1 720.5 1113.6 720.5 1106.0 720.5 C1098.4 720.5 1082.7 720.5 1074.6 720.5 C1066.5 720.5 1062.6 720.5 1057.3 720.5 C1052.0 720.5 1047.3 720.5 1043.0 720.5 C1038.7 720.5 1035.8 720.5 1031.5 720.5 C1027.2 720.5 1022.5 720.5 1017.2 720.5 C1012.0 720.5 1006.1 720.5 1000.0 720.5 C993.9 720.5 986.0 720.5 980.6 720.5 C975.2 720.5 972.2 720.5 967.7 720.5 C963.2 720.5 960.3 720.5 953.4 720.5 C946.5 720.5 932.7 720.5 926.2 720.5 C919.8 720.5 919.0 720.5 914.7 720.5 C910.4 720.5 906.9 720.5 900.4 720.5 C893.9 720.5 884.1 720.5 876.0 720.5 C867.9 720.5 857.3 720.5 851.6 720.5 C845.9 720.5 845.9 720.5 841.6 720.5 C837.3 720.5 831.4 720.5 825.8 720.5 C820.2 720.5 811.0 720.5 808.0 720.5 Z" fill="#5bc0dc"/><path d="M808.0 580.8 C811.0 580.7 820.2 580.2 825.8 579.9 C831.4 579.7 837.3 579.4 841.6 579.2 C845.9 579.1 845.9 579.1 851.6 579.0 C857.3 578.8 867.9 578.4 876.0 578.3 C884.1 578.1 893.9 578.0 900.4 578.0 C906.9 578.0 910.4 577.9 914.7 578.0 C919.0 578.1 919.8 578.3 926.2 578.6 C932.7 578.8 946.5 579.4 953.4 579.7 C960.3 579.9 963.2 579.9 967.7 580.0 C972.2 580.1 975.2 580.2 980.6 580.3 C986.0 580.5 993.9 580.9 1000.0 580.8 C1006.1 580.7 1012.0 579.7 1017.2 579.6 C1022.5 579.5 1027.2 580.2 1031.5 580.5 C1035.8 580.7 1038.7 580.9 1043.0 581.1 C1047.3 581.4 1052.0 581.8 1057.3 582.0 C1062.6 582.2 1066.5 582.6 1074.6 582.1 C1082.7 581.5 1098.4 578.9 1106.0 578.5 C1113.6 578.1 1116.1 579.2 1120.4 579.5 C1124.7 579.8 1126.6 580.6 1131.9 580.4 C1137.2 580.2 1145.3 578.5 1152.0 578.4 C1158.7 578.3 1166.3 579.5 1172.0 579.8 C1177.7 580.2 1183.7 580.6 1186.0 580.8" stroke="#f0392c" stroke-width="0.8" fill="none"/><path d="M808.0 642.2 L825.8 642.2 L841.6 642.2 L851.6 642.2 L876.0 642.2 L900.4 642.2 L914.7 642.2 L926.2 642.2 L953.4 642.2 L967.7 642.2 L980.6 642.2 L1000.0 642.2 L1017.2 642.2 L1031.5 642.2 L1043.0 642.2 L1057.3 642.2 L1074.6 642.2 L1106.0 642.2 L1120.4 642.2 L1131.9 642.2 L1152.0 642.2 L1172.0 642.2 L1186.0 642.2 L1186.0 720.5 L1172.0 720.5 L1152.0 720.5 L1131.9 720.5 L1120.4 720.5 L1106.0 720.5 L1074.6 720.5 L1057.3 720.5 L1043.0 720.5 L1031.5 720.5 L1017.2 720.5 L1000.0 720.5 L980.6 720.5 L967.7 720.5 L953.4 720.5 L926.2 720.5 L914.7 720.5 L900.4 720.5 L876.0 720.5 L851.6 720.5 L841.6 720.5 L825.8 720.5 L808.0 720.5 Z" fill="#e2a32f"/><path d="M808.5 642.2 H1185.4" stroke="#3fc6ec" stroke-width="1"/><path d="M808.0 719.3 L825.8 719.3 L841.6 719.3 L851.6 719.3 L876.0 719.3 L900.4 719.3 L914.7 719.3 L926.2 719.3 L953.4 719.3 L967.7 719.3 L980.6 719.3 L1000.0 719.3 L1017.2 719.3 L1031.5 719.3 L1043.0 719.3 L1057.3 719.3 L1074.6 719.3 L1106.0 719.3 L1120.4 719.3 L1131.9 719.3 L1152.0 719.3 L1172.0 719.3 L1186.0 719.3 L1186.0 720.5 L1172.0 720.5 L1152.0 720.5 L1131.9 720.5 L1120.4 720.5 L1106.0 720.5 L1074.6 720.5 L1057.3 720.5 L1043.0 720.5 L1031.5 720.5 L1017.2 720.5 L1000.0 720.5 L980.6 720.5 L967.7 720.5 L953.4 720.5 L926.2 720.5 L914.7 720.5 L900.4 720.5 L876.0 720.5 L851.6 720.5 L841.6 720.5 L825.8 720.5 L808.0 720.5 Z" fill="#6ba34b"/></svg>
<div class="ax" style="right:1277px;top:411.5px">1.0</div>
<div class="ax" style="right:1277px;top:471.9px">0.8</div>
<div class="ax" style="right:1277px;top:532.3px">0.6</div>
<div class="ax" style="right:1277px;top:592.7px">0.4</div>
<div class="ax" style="right:1277px;top:653.1px">0.2</div>
<div class="ax" style="right:1277px;top:713.5px">0</div>
<div class="ax" style="left:105px;width:60px;text-align:center;top:729.5px">11:20</div>
<div class="ax" style="left:174px;width:60px;text-align:center;top:729.5px">11:30</div>
<div class="ax" style="left:243px;width:60px;text-align:center;top:729.5px">11:40</div>
<div class="ax" style="left:312px;width:60px;text-align:center;top:729.5px">11:50</div>
<div class="ax" style="left:381px;width:60px;text-align:center;top:729.5px">12:00</div>
<div class="ax" style="left:450px;width:60px;text-align:center;top:729.5px">12:10</div>
<div class="ax" style="right:592px;top:411.9px">3.3 GiB</div>
<div class="ax" style="right:592px;top:455.0px">2.8 GiB</div>
<div class="ax" style="right:592px;top:498.1px">2.3 GiB</div>
<div class="ax" style="right:592px;top:541.2px">1.9 GiB</div>
<div class="ax" style="right:592px;top:584.3px">1.4 GiB</div>
<div class="ax" style="right:592px;top:627.4px">954 MiB</div>
<div class="ax" style="right:592px;top:670.5px">477 MiB</div>
<div class="ax" style="right:592px;top:713.5px">0 B</div>
<div class="ax" style="left:807.2px;width:60px;text-align:center;top:729.5px">02:10</div>
<div class="ax" style="left:871.6px;width:60px;text-align:center;top:729.5px">02:20</div>
<div class="ax" style="left:936.0px;width:60px;text-align:center;top:729.5px">02:30</div>
<div class="ax" style="left:1000.4px;width:60px;text-align:center;top:729.5px">02:40</div>
<div class="ax" style="left:1064.8px;width:60px;text-align:center;top:729.5px">02:50</div>
<div class="ax" style="left:1129.2px;width:60px;text-align:center;top:729.5px">03:00</div>
<div class="lgl" style="left:574px;top:428.0px;background:#6ba34b"></div>
<div class="lg" style="left:596px;top:423.0px">argo</div>
<div class="lgl" style="left:574px;top:455.5px;background:#e2a32f"></div>
<div class="lg" style="left:596px;top:450.5px">devtron-demo</div>
<div class="lgl" style="left:574px;top:483.0px;background:#5bc0dc"></div>
<div class="lg" style="left:596px;top:478.0px">devtroncd</div>
<div class="lgl" style="left:574px;top:510.5px;background:#e0463a"></div>
<div class="lg" style="left:596px;top:505.5px">ingress</div>
<div class="lgl" style="left:574px;top:538.0px;background:#e0463a"></div>
<div class="lg" style="left:596px;top:533.0px">kube-system</div>
<div class="lgl" style="left:574px;top:565.5px;background:#1b60b3"></div>
<div class="lg" style="left:596px;top:560.5px">monitoring</div>
<div class="lgl" style="left:574px;top:593.0px;background:#a83993"></div>
<div class="lg" style="left:596px;top:588.0px">utils</div>
<div class="lgl" style="left:1230px;top:428.0px;background:#6ba34b"></div>
<div class="lg" style="left:1252px;top:423.0px">argo</div>
<div class="lgl" style="left:1230px;top:455.5px;background:#e2a32f"></div>
<div class="lg" style="left:1252px;top:450.5px">devtron-demo</div>
<div class="lgl" style="left:1230px;top:483.0px;background:#5bc0dc"></div>
<div class="lg" style="left:1252px;top:478.0px">devtroncd</div>
<div class="lgl" style="left:1230px;top:510.5px;background:#e0463a"></div>
<div class="lg" style="left:1252px;top:505.5px">ingress</div>
<div class="lgl" style="left:1230px;top:538.0px;background:#e0463a"></div>
<div class="lg" style="left:1252px;top:533.0px">kube-system</div>
<div class="lgl" style="left:1230px;top:565.5px;background:#1b60b3"></div>
<div class="lg" style="left:1252px;top:560.5px">monitoring</div>
<div class="lgl" style="left:1230px;top:593.0px;background:#a83993"></div>
<div class="lg" style="left:1252px;top:588.0px">utils</div><!--/CHARTS-->
</body></html>
